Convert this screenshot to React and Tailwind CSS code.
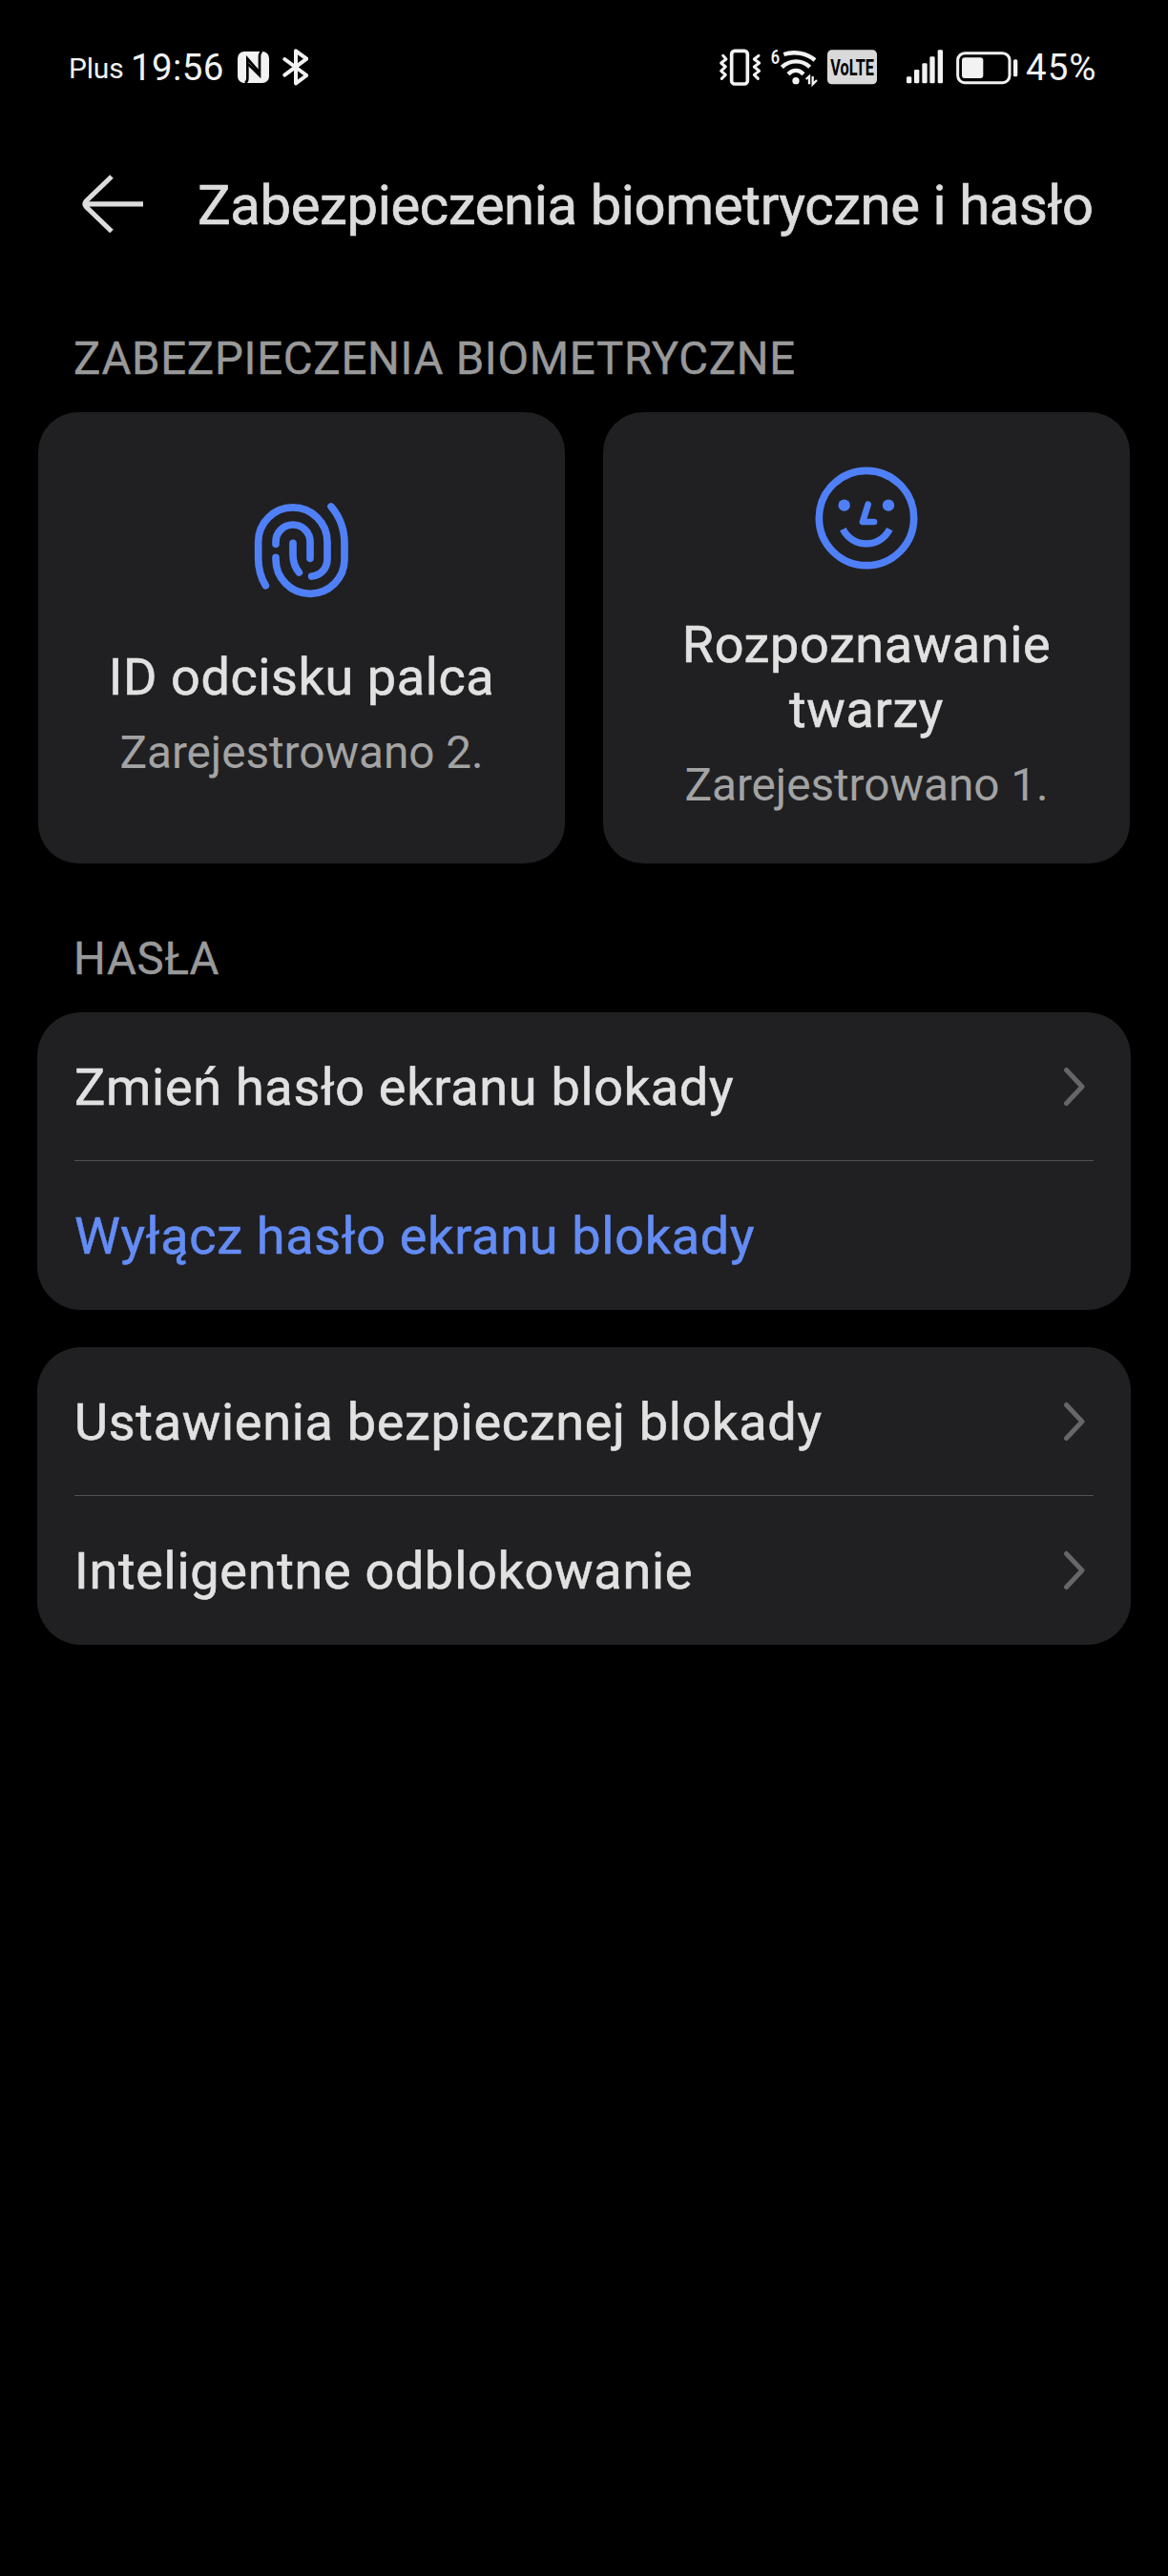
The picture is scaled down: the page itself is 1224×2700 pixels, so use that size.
function StatusBar() {
  return (
    <div className="flex h-[142px] items-center justify-between pl-[72px] pr-[72px] text-[#f2f2f2]">
      <div className="flex items-center">
        <span className="w-[65px] text-[30px] tracking-[-0.2px]">Plus</span>
        <span className="w-[112px] text-[38.5px] tracking-[0.4px]">19:56</span>
        <NfcIcon />
        <BluetoothIcon />
      </div>
      <div className="flex items-center">
        <VibrateIcon />
        <WifiIcon />
        <VolteIcon />
        <SignalIcon />
        <BatteryIcon />
        <span className="ml-2 w-[77px] text-[38.5px] tracking-[1px]">45%</span>
      </div>
    </div>
  );
}

function NfcIcon() {
  return (
    <svg className="h-10 w-[33px]" viewBox="0 0 99 120" fill="none">
      <rect x="0" y="9" width="99" height="99" rx="21" fill="currentColor" />
      <path d="M24 108Q31 104 31 94V32L66 72" stroke="#000" strokeWidth="8" />
      <path d="M76 9Q69 14 69 24V84L33 48" stroke="#000" strokeWidth="8" />
    </svg>
  );
}

function BluetoothIcon() {
  return (
    <svg className="ml-[14px] h-10 w-[27px]" viewBox="0 0 81 120" fill="none" stroke="currentColor" strokeWidth="12" strokeLinecap="round" strokeLinejoin="round">
      <path d="M7 33L76 84L42 109V7L76 32L7 83" />
    </svg>
  );
}

function VibrateIcon() {
  return (
    <svg className="h-10 w-[45px]" viewBox="0 0 135 120" fill="none" stroke="currentColor" strokeWidth="11" strokeLinecap="round" strokeLinejoin="round">
      <rect x="41" y="7" width="50" height="104" rx="10" />
      <path d="M14 22L24 33L8 45L22 57L8 70L22 82L10 94" strokeWidth="9" />
      <path d="M126 22L112 33L128 45L112 57L128 70L112 82L124 94" strokeWidth="9" />
    </svg>
  );
}

function WifiIcon() {
  return (
    <svg className="ml-[10px] h-10 w-[54px] overflow-visible" viewBox="0 0 162 120" fill="none" stroke="currentColor" strokeWidth="13">
      <text x="-1" y="48" fill="currentColor" stroke="none" fontSize="62" fontWeight="600" textLength="28" lengthAdjust="spacingAndGlyphs">6</text>
      <path d="M40 18C74 7 112 14 138 36" />
      <path d="M34 58C60 34 98 34 122 58" />
      <path d="M54 80C69 65 87 65 102 80" />
      <circle cx="78" cy="101" r="11" fill="currentColor" stroke="none" />
      <path d="M110 96L120 87V112M131 87V112L144 99" strokeWidth="7" />
    </svg>
  );
}

function VolteIcon() {
  return (
    <svg className="ml-[5px] h-10 w-[52px] overflow-visible" viewBox="0 0 156 120">
      <rect x="0" y="4" width="156" height="108" rx="14" fill="#d9d9d9" />
      <text x="10" y="84" fontSize="74" fontWeight="700" textLength="137" lengthAdjust="spacingAndGlyphs" fill="#000">VoLTE</text>
    </svg>
  );
}

function SignalIcon() {
  return (
    <svg className="ml-[31px] h-10 w-[38px]" viewBox="0 0 114 120" fill="currentColor">
      <rect x="0" y="88" width="16" height="21" rx="4" />
      <rect x="24" y="66" width="16" height="43" rx="4" />
      <rect x="49" y="46" width="16" height="63" rx="4" />
      <rect x="73" y="25" width="16" height="84" rx="4" />
      <rect x="98" y="4" width="16" height="105" rx="4" />
    </svg>
  );
}

function BatteryIcon() {
  return (
    <svg className="ml-[14px] h-10 w-[65px]" viewBox="0 0 195 120" fill="currentColor">
      <rect x="5" y="14" width="163" height="93" rx="22" fill="none" stroke="currentColor" strokeWidth="9" />
      <rect x="18" y="28" width="67" height="65" rx="9" />
      <rect x="180" y="34" width="13" height="54" rx="5" />
    </svg>
  );
}

function BackArrow() {
  return (
    <svg className="h-16 w-16" viewBox="86 182 64 64" fill="none" stroke="#dcdcdc" strokeWidth="5.2">
      <path d="M117 185L90.5 210.5Q87.5 213.7 90.5 217L117 242.5M90 213.8H150" />
    </svg>
  );
}

function FingerprintIcon() {
  return (
    <svg className="h-[134px] w-[134px]" viewBox="-3 0 402 402" fill="none" stroke="#5080f7" strokeWidth="23" strokeLinecap="round">
      <path d="M85 311C69 285 62 260 62 225V174A108.500 108.500 0 0 1 279 174V228C279 258 258 279 230 282" />
      <path d="M117 181V174A54 54 0 0 1 225 174V226" />
      <path d="M171 178V215C171 238 177 253 190 270" />
      <path d="M117 223V229A108 108 0 0 0 333 229V180C333 132 318 94 291 63" />
    </svg>
  );
}

function FaceIcon() {
  return (
    <svg className="h-[134px] w-[134px]" viewBox="2 1 402 402" fill="none" stroke="#5080f7" strokeWidth="23">
      <circle cx="203" cy="202" r="149" />
      <circle cx="133" cy="162" r="18.500" fill="#5080f7" stroke="none" />
      <circle cx="272" cy="162" r="18.500" fill="#5080f7" stroke="none" />
      <path d="M208 159L191 214H227" strokeWidth="20" strokeLinecap="round" strokeLinejoin="round" />
      <path d="M129 237C160 298 245 298 276 237" strokeWidth="22" />
    </svg>
  );
}

function Chevron() {
  return (
    <svg className="h-[42px] w-[23px]" viewBox="0 0 23 42" fill="none" stroke="#666668" strokeWidth="5" strokeLinecap="round" strokeLinejoin="round">
      <path d="M3.500 3.500L20 21L3.500 38.500" />
    </svg>
  );
}

function SectionTitle({ children }) {
  return <h2 className="mb-[15px] flex h-20 items-center pl-[77px] text-[47.4px] tracking-[0.7px] text-[#999] [-webkit-text-stroke:0.4px]">{children}</h2>;
}

function BiometricCard({ icon, title, status }) {
  return (
    <div className="flex h-[473px] flex-1 flex-col items-center justify-center rounded-[42px] bg-[#202022] px-10 pb-[10px] text-center">
      {icon}
      <h3 className="mt-8 text-[54px] leading-[68px] tracking-[0.6px] text-[#e1e1e1] [-webkit-text-stroke:0.6px]">{title}</h3>
      <p className="mt-[17px] text-[47.8px] leading-[56px] tracking-[-0.1px] text-[#a3a3a3]">{status}</p>
    </div>
  );
}

function SettingsGroup({ items }) {
  return (
    <div className="mx-[39px] h-[312px] rounded-[46px] bg-[#202022]">
      {items.map((item, i) => (
        <div key={item.label} className={i > 0 ? "mx-[39px] border-t border-[#505052]" : "mx-[39px]"}>
          <div className="flex h-[155px] items-center justify-between pr-[9px]">
            <span className={item.accent ? "pt-[2px] text-[#648cf5]" : "pt-[2px] text-[#e1e1e1]"}>{item.label}</span>
            {!item.accent && <Chevron />}
          </div>
        </div>
      ))}
    </div>
  );
}

export default function App() {
  return (
    <div className="min-h-[2700px] w-[1224px] bg-black font-['Roboto',sans-serif]">
      <StatusBar />
      <header className="flex h-36 items-center pl-[86px]">
        <BackArrow />
        <h1 className="ml-[57px] pt-[3px] text-[58px] tracking-[-0.38px] whitespace-nowrap text-[#dcdcdc] [-webkit-text-stroke:0.7px]">Zabezpieczenia biometryczne i hasło</h1>
      </header>

      <div className="pt-[51px]">
        <SectionTitle>ZABEZPIECZENIA BIOMETRYCZNE</SectionTitle>
        <div className="mx-10 flex gap-10">
          <BiometricCard icon={<FingerprintIcon />} title="ID odcisku palca" status="Zarejestrowano 2." />
          <BiometricCard icon={<FaceIcon />} title="Rozpoznawanie twarzy" status="Zarejestrowano 1." />
        </div>
      </div>

      <div className="pt-[61px]">
        <SectionTitle>HASŁA</SectionTitle>
        <div className="flex flex-col gap-[39px] text-[54px] tracking-[0.7px] whitespace-nowrap [-webkit-text-stroke:0.6px]">
          <SettingsGroup items={[{ label: "Zmień hasło ekranu blokady" }, { label: "Wyłącz hasło ekranu blokady", accent: true }]} />
          <SettingsGroup items={[{ label: "Ustawienia bezpiecznej blokady" }, { label: "Inteligentne odblokowanie" }]} />
        </div>
      </div>
    </div>
  );
}
